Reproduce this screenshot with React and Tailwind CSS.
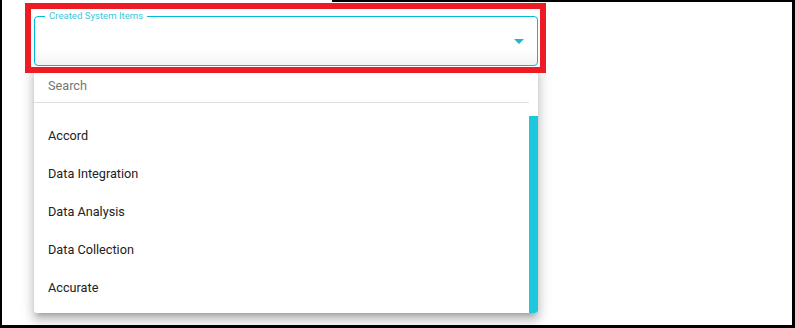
import React from "react";

const items = [
  "Accord",
  "Data Integration",
  "Data Analysis",
  "Data Collection",
  "Accurate",
];

const SystemItemsSelect = () => {
  return (
    <div className="w-[504px]">
      {/* outlined field */}
      <div className="relative h-[50px] rounded-[4px] border border-[#00bcd4] bg-gradient-to-b from-white from-70% to-[#f3f3f3] flex items-center justify-end pr-[6px]">
        <span className="absolute -top-[7px] left-[10px] bg-white px-[4px] text-[9.6px] leading-[12px] text-[#3cc8dc]">
          Created System Items
        </span>
        <svg viewBox="0 0 24 24" className="w-6 h-6 mt-[-1px]" fill="#1cb8d0">
          <path d="M7 10l5 5 5-5z" />
        </svg>
      </div>

      {/* dropdown list */}
      <div className="flex h-[247px] bg-white rounded-b-[3px] shadow-[0_5px_5px_-3px_rgba(0,0,0,0.2),0_8px_10px_1px_rgba(0,0,0,0.14),0_3px_14px_2px_rgba(0,0,0,0.12)] overflow-hidden">
        <div className="flex-1 flex flex-col">
          <div className="h-[37px] flex items-center pl-[14px] pt-[3px] border-b border-[#e0e0e0] text-[12.7px] text-[#757575]">
            Search
          </div>
          <ul className="pt-[14px]">
            {items.map((item) => (
              <li
                key={item}
                className="h-[38px] flex items-center pl-[14px] text-[12.7px] text-[#212121]"
              >
                {item}
              </li>
            ))}
          </ul>
        </div>
        <div className="w-[9px] flex flex-col pt-[50px]">
          <div className="flex-1 bg-[#1ec8dc]" />
        </div>
      </div>
    </div>
  );
};

export default function App() {
  return (
    <div className="relative w-[795px] h-[328px] bg-white border-l-2 border-r-[3px] border-b-[3px] border-black font-[Roboto,sans-serif] pl-[32px] pt-[16px] overflow-hidden">
      {/* top edge of the captured frame */}
      <div className="absolute top-0 left-[330px] right-0 h-[2px] bg-black" />

      <SystemItemsSelect />

      {/* highlight annotation */}
      <div className="absolute left-[23px] top-[3px] w-[521px] h-[70px] border-[6px] border-[#ed1c24]" />
    </div>
  );
}
